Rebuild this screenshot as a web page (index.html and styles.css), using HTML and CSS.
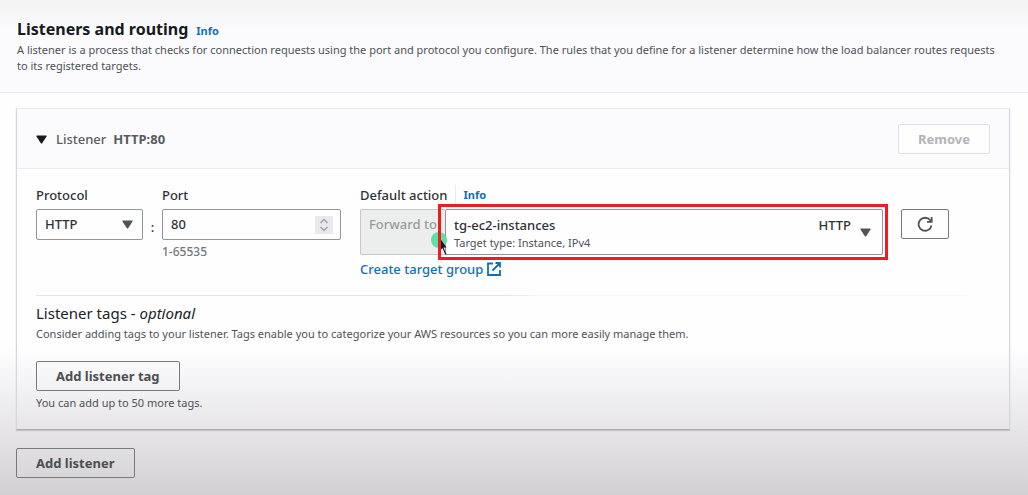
FILE: index.html
```html
<!DOCTYPE html>
<html lang="en">
<head>
<meta charset="utf-8">
<meta name="viewport" content="width=device-width, initial-scale=1">
<title>Listeners and routing</title>
<link rel="stylesheet" href="styles.css">
</head>
<body>
<main class="panel">
  <header class="panel-header">
    <div class="title-row">
      <h1 class="title">Listeners and routing</h1>
      <a class="info" href="#">Info</a>
    </div>
    <p class="small">A listener is a process that checks for connection requests using the port and protocol you configure. The rules that you define for a listener determine how the load balancer routes requests to its registered targets.</p>
  </header>

  <div class="panel-body">
    <section class="card">
      <div class="card-header">
        <button class="toggle" type="button" aria-expanded="true">
          <svg class="caret" viewBox="0 0 11 9" aria-hidden="true"><path d="M1 .5h9q1 0 .5 1L6.300 8q-.8 1-1.600 0L.5 1.500Q0 .5 1 .5z"/></svg>
          <span>Listener</span>
          <strong>HTTP:80</strong>
        </button>
        <button class="button" type="button" disabled>Remove</button>
      </div>

      <div class="card-body">
        <div class="fields">
          <div class="field">
            <label class="label" for="protocol">Protocol</label>
            <div class="control">
              <select class="input" id="protocol"><option>HTTP</option></select>
              <svg class="caret end" viewBox="0 0 11 9" aria-hidden="true"><path d="M1 .5h9q1 0 .5 1L6.300 8q-.8 1-1.600 0L.5 1.500Q0 .5 1 .5z"/></svg>
            </div>
          </div>
          <span class="colon">:</span>
          <div class="field">
            <label class="label" for="port">Port</label>
            <div class="control">
              <input class="input" id="port" type="number" min="1" max="65535" value="80">
              <svg class="spinner end" viewBox="0 0 18 18" aria-hidden="true"><path d="M5.500 7 9 3.500 12.500 7M5.500 11 9 14.500 12.500 11"/></svg>
            </div>
            <p class="hint">1-65535</p>
          </div>
          <div class="field action">
            <div class="label-row">
              <label class="label" for="target">Default action</label>
              <a class="info divided" href="#">Info</a>
            </div>
            <div class="forward">
              <div class="forward-label">Forward to
                <svg class="pointer" viewBox="0 0 18 26" aria-hidden="true"><circle cx="8" cy="8" r="8" fill="#5fe0a2"/><path d="M9.500 7v11l2-2 3 7 1-.5-3-7h3z" fill="#161616"/></svg>
              </div>
              <div class="control target">
                <select class="input" id="target" aria-describedby="target-type"><option>tg-ec2-instances</option></select>
                <span class="target-type small" id="target-type">Target type: Instance, IPv4</span>
                <span class="target-protocol">HTTP</span>
                <svg class="caret end" viewBox="0 0 11 9" aria-hidden="true"><path d="M1 .5h9q1 0 .5 1L6.300 8q-.8 1-1.600 0L.5 1.500Q0 .5 1 .5z"/></svg>
                <span class="highlight"></span>
              </div>
            </div>
            <a class="link" href="#">Create target group
              <svg class="external" viewBox="0 0 14 14" aria-hidden="true"><path d="M6 1.500H1v11.500h12V8M8.500 1H13v4.500M13 1 5.500 8.500"/></svg>
            </a>
          </div>
          <button class="button refresh" type="button" aria-label="Refresh target groups">
            <svg class="refresh-icon" viewBox="0 0 16 16" aria-hidden="true"><path d="M14.500 9.500A6.500 6.500 0 1 1 13.300 4.300L14.500 5.500M14.700 1v4.800H10"/></svg>
          </button>
        </div>

        <hr class="divider">

        <h2 class="tags-title">Listener tags - <em>optional</em></h2>
        <p class="small">Consider adding tags to your listener. Tags enable you to categorize your AWS resources so you can more easily manage them.</p>
        <button class="button add-tag" type="button">Add listener tag</button>
        <p class="small">You can add up to 50 more tags.</p>
      </div>
    </section>
    <button class="button" type="button">Add listener</button>
  </div>
</main>
</body>
</html>
```
FILE: styles.css
```css
* { box-sizing: border-box; }

body {
  margin: 0;
  min-height: 100vh;
  background: linear-gradient(#fefeff 70%, #e5e3e6 88%, #d2d0d3) #d2d0d3;
  color: #303236;
  font: 500 13px/20px "Noto Sans", "Open Sans", sans-serif;
}

h1, h2, p { margin: 0; }
a { color: #0f70b7; text-decoration: none; }
button, input, select { font: inherit; color: inherit; }

.panel-header {
  padding: 16px 28px 18px 17px;
  border-bottom: 1px solid #ebecee;
  background: linear-gradient(#f3f3f4, #fbfbfd 30px);
}
.title-row { display: flex; align-items: baseline; gap: 8px; }
.title { font-size: 16px; line-height: 26px; font-weight: 700; color: #17191c; }
.info { font-size: 11px; font-weight: 700; }
.small { font-size: 11px; font-weight: 400; line-height: 16px; color: #505256; }

.panel-body { padding: 15px 18px 16px 16px; }

.card {
  margin-bottom: 18px;
  border: 1px solid #d5d8da;
  border-top-color: #e7e9eb;
  border-bottom-color: #a8aaac;
  box-shadow: 0 1px 1px #c4c6c8;
}
.card-header {
  display: flex;
  align-items: center;
  justify-content: space-between;
  padding: 15px 19px 14px;
  border-bottom: 1px solid #ebecef;
  background: #fbfbfd;
}
.toggle {
  display: flex;
  align-items: center;
  gap: 7px;
  padding: 0;
  border: 0;
  background: none;
  color: #5a5c60;
}
.toggle .caret { margin-right: 2px; fill: #17191c; }
.caret { width: 11px; height: 9px; fill: #505357; }

.button {
  height: 30px;
  padding: 0 19px;
  border: 1px solid #77797c;
  border-radius: 2px;
  background: transparent;
  color: #4c4e52;
  font-weight: 700;
}
.button:disabled { border-color: #dfe1e3; background: #fefeff; color: #b2b5b8; }

.card-body { padding: 16px 19px 18px; }
.fields {
  display: grid;
  grid-template-columns: minmax(0, 107fr) 19px minmax(0, 179fr) minmax(0, 542fr) 66px;
  padding-right: 41px;
}
.label, .label-row { display: block; height: 24px; }
.label-row { display: flex; gap: 8px; }
.info.divided { height: 20px; padding-left: 7px; border-left: 1px solid #e8eaec; }
.colon { padding-top: 32px; text-align: center; }
.hint { font-size: 12px; color: #74777b; line-height: 24px; }

.control { position: relative; }
.input {
  display: block;
  width: 100%;
  height: 31px;
  padding: 0 8px 2px;
  border: 1px solid #929599;
  border-radius: 2px;
  background: #fefeff;
  appearance: none;
}
.input[type="number"] { appearance: textfield; }
.end { position: absolute; right: 10px; top: 11px; }
.spinner.end {
  right: 8px;
  top: 7px;
  width: 18px;
  height: 18px;
  background: #e9e9ed;
  fill: none;
  stroke: #a0a2a6;
  stroke-width: 1.5;
}

.action { padding-left: 19px; }
.forward { display: flex; }
.forward-label {
  position: relative;
  flex: 0 0 85px;
  height: 46px;
  padding: 4px 0 0 8px;
  border: 1px solid #c6caca;
  border-right: 0;
  border-radius: 2px 0 0 2px;
  background: #eceeee;
  color: #969a9c;
  white-space: nowrap;
}
.pointer { position: absolute; z-index: 1; right: -4px; top: 22px; width: 18px; height: 26px; }
.target { flex: 1; }
.target .input { height: 46px; padding-bottom: 15px; }
.target-type { position: absolute; left: 9px; top: 26px; pointer-events: none; }
.target-protocol { position: absolute; right: 32px; top: 6px; pointer-events: none; }
.target .end { top: 19px; right: 12px; }
.highlight { position: absolute; z-index: 2; inset: -5px -5px -5px -7px; border: 3px solid #ed1c24; pointer-events: none; }

.link { display: flex; align-items: center; gap: 4px; margin-top: 4px; }
.external { width: 14px; height: 14px; fill: none; stroke: currentColor; stroke-width: 1.8; }

.refresh { width: 48px; margin: 24px 0 0 18px; padding: 0; }
.refresh-icon { display: block; width: 16px; height: 16px; margin: auto; fill: none; stroke: #505357; stroke-width: 1.8; }

.divider { height: 1px; margin: 16px 23px 7px 0; border: 0; background: linear-gradient(90deg, #e4e6e9 50%, #f6f6f9 54%); }
.tags-title { font-size: 15px; line-height: 20px; font-weight: 400; color: #202226; margin-bottom: 3px; }
.add-tag { margin: 19px 0 4px; }
```
